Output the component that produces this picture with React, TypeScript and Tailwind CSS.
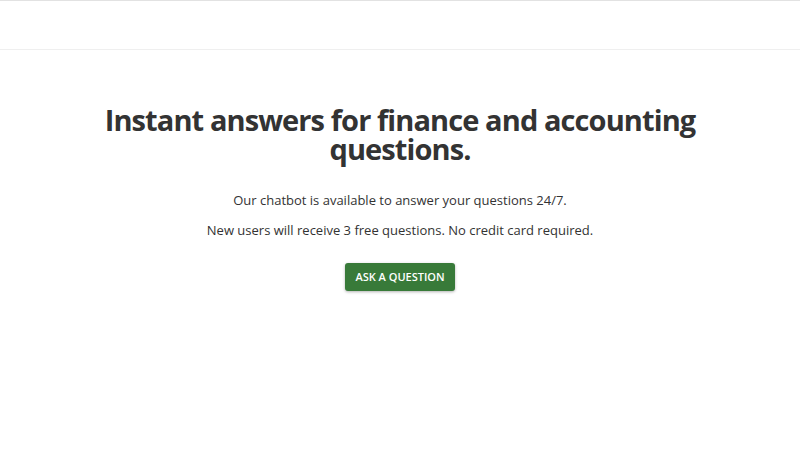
import React from "react";

export default function App() {
  return (
    <div className="min-h-[450px] w-full bg-white" style={{ fontFamily: '"Open Sans", "Liberation Sans", sans-serif' }}>
      <header className="h-[50px] border-t border-t-[#e2e2e2] border-b border-b-[#efefef] bg-white" />
      <main className="flex flex-col items-center text-[#333333]">
        <h1 className="mt-[55px] w-[700px] text-center text-[29px] font-bold leading-[29px] tracking-[-0.9px] text-[#333333]">
          Instant answers for finance and accounting questions.
        </h1>
        <p className="mt-[27px] text-[13px] leading-[20px]">Our chatbot is available to answer your questions 24/7.</p>
        <p className="mt-[10px] text-[13px] leading-[20px]">New users will receive 3 free questions. No credit card required.</p>
        <button className="mt-[23px] flex h-[28px] w-[110px] items-center justify-center rounded-[3px] bg-[#387a39] text-[11px] font-semibold text-white shadow-[0_1px_3px_rgba(0,0,0,0.3)]">
          ASK A QUESTION
        </button>
      </main>
    </div>
  );
}
